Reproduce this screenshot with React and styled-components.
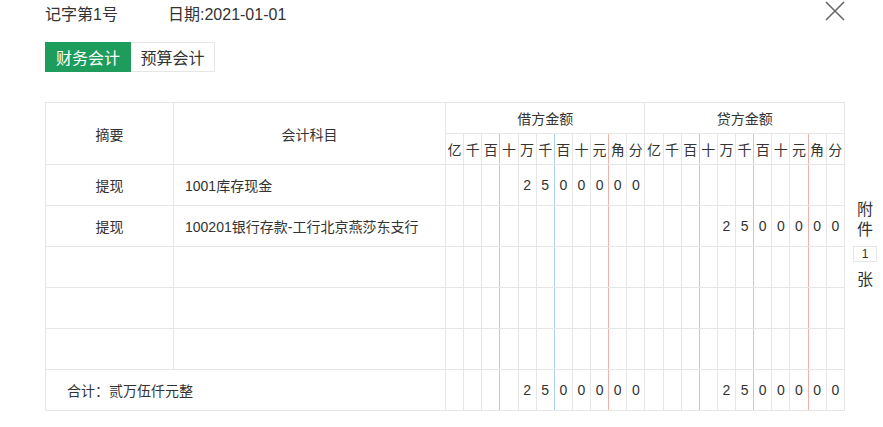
import styled, { createGlobalStyle } from "styled-components"

const GlobalStyle = createGlobalStyle`
  body {
    margin: 0;
    background: #fff;
    font-family: "Liberation Sans", "Noto Sans CJK SC", sans-serif;
    color: #333;
  }
`

const units = ["亿", "千", "百", "十", "万", "千", "百", "十", "元", "角", "分"]
const amount = ["", "", "", "", "2", "5", "0", "0", "0", "0", "0"]
const empty = Array(11).fill("")

const rows = [
  { summary: "提现", account: "1001库存现金", debit: amount, credit: empty },
  { summary: "提现", account: "100201银行存款-工行北京燕莎东支行", debit: empty, credit: amount },
  { summary: "", account: "", debit: empty, credit: empty },
  { summary: "", account: "", debit: empty, credit: empty },
  { summary: "", account: "", debit: empty, credit: empty },
]

const GRID = "#e6e6e6"
const BLUE = "#a9d3ea"
const RED = "#efb3ab"

// line after 百 and 千 is blue, after 元 is red
function rightLine(i) {
  if (i === 2 || i === 5) return BLUE
  if (i === 8) return RED
  return GRID
}

function Digits({ values, header }) {
  return values.map((v, i) => (
    <DigitCell key={i} $right={rightLine(i)} $header={header}>{v}</DigitCell>
  ))
}

export default function App() {
  return (
    <Page>
      <GlobalStyle />
      <TopBar>
        <VoucherNo>记字第1号</VoucherNo>
        <DateText>日期:2021-01-01</DateText>
        <CloseBtn>
          <svg width="20" height="20" viewBox="0 0 20 20">
            <path d="M1 1 L19 19 M19 1 L1 19" stroke="#666" strokeWidth="1.6" fill="none" />
          </svg>
        </CloseBtn>
      </TopBar>
      <Tabs>
        <Tab $active>财务会计</Tab>
        <Tab>预算会计</Tab>
      </Tabs>
      <Body>
        <Table>
          <colgroup>
            <col style={{ width: 128 }} />
            <col style={{ width: 272 }} />
            {Array.from({ length: 22 }).map((_, i) => <col key={i} />)}
          </colgroup>
          <thead>
            <tr>
              <HeadCell rowSpan={2}>摘要</HeadCell>
              <HeadCell rowSpan={2}>会计科目</HeadCell>
              <GroupCell colSpan={11}>借方金额</GroupCell>
              <GroupCell colSpan={11}>贷方金额</GroupCell>
            </tr>
            <tr>
              <Digits values={units} header />
              <Digits values={units} header />
            </tr>
          </thead>
          <tbody>
            {rows.map((r, idx) => (
              <tr key={idx}>
                <SummaryCell>{r.summary}</SummaryCell>
                <AccountCell>{r.account}</AccountCell>
                <Digits values={r.debit} />
                <Digits values={r.credit} />
              </tr>
            ))}
            <tr>
              <TotalCell colSpan={2}>合计：贰万伍仟元整</TotalCell>
              <Digits values={amount} />
              <Digits values={amount} />
            </tr>
          </tbody>
        </Table>
        <Attach>
          <AttachChar>附</AttachChar>
          <AttachChar>件</AttachChar>
          <AttachBox>1</AttachBox>
          <AttachChar>张</AttachChar>
        </Attach>
      </Body>
    </Page>
  )
}

const Page = styled.div`
  width: 883px;
  height: 427px;
  padding-left: 45px;
  box-sizing: border-box;
  position: relative;
`

const TopBar = styled.div`
  display: flex;
  align-items: center;
  height: 26px;
  font-size: 16px;
  color: #333;
`

const VoucherNo = styled.span`
  width: 123px;
`

const DateText = styled.span``

const CloseBtn = styled.div`
  position: absolute;
  left: 825px;
  top: 1px;
  width: 20px;
  height: 20px;
  cursor: pointer;
`

const Tabs = styled.div`
  display: flex;
  margin-top: 16px;
  height: 30px;
`

const Tab = styled.div`
  box-sizing: border-box;
  display: flex;
  align-items: center;
  justify-content: center;
  font-size: 16px;
  background: ${p => (p.$active ? "#1e9c5b" : "#fff")};
  color: ${p => (p.$active ? "#fff" : "#333")};
  border: 1px solid ${p => (p.$active ? "#1e9c5b" : GRID)};
  border-left: ${p => (p.$active ? "1px solid #1e9c5b" : "none")};
  width: ${p => (p.$active ? "86px" : "84px")};
`

const Body = styled.div`
  display: flex;
  margin-top: 30px;
  gap: 8px;
`

const Table = styled.table`
  width: 800px;
  table-layout: fixed;
  border-collapse: collapse;
  border: 1px solid ${GRID};
  font-size: 14px;
  color: #333;

  td, th {
    padding: 0;
    font-weight: normal;
  }
`

const HeadCell = styled.th`
  border: 1px solid ${GRID};
  height: 61px;
  text-align: center;
`

const GroupCell = styled.th`
  border: 1px solid ${GRID};
  height: 30px;
  text-align: center;
`

const DigitCell = styled.td`
  border: 1px solid ${GRID};
  border-right-color: ${p => p.$right};
  text-align: center;
  height: ${p => (p.$header ? "30px" : "40px")};
  font-size: 14px;
  font-family: ${p => (p.$header ? '"Noto Sans CJK SC", sans-serif' : '"Liberation Sans", sans-serif')};
`

const SummaryCell = styled.td`
  border: 1px solid ${GRID};
  text-align: center;
  height: 40px;
`

const AccountCell = styled.td`
  border: 1px solid ${GRID};
  padding-left: 11px !important;
  text-align: left;
`

const TotalCell = styled.td`
  border: 1px solid ${GRID};
  padding-left: 21px !important;
  text-align: left;
  height: 40px;
`

const Attach = styled.div`
  display: flex;
  flex-direction: column;
  align-items: center;
  width: 24px;
  padding-top: 98px;
`

const AttachChar = styled.div`
  font-size: 16px;
  line-height: 20px;
  color: #333;
`

const AttachBox = styled.div`
  width: 24px;
  height: 16px;
  box-sizing: border-box;
  border: 1px solid ${GRID};
  font-size: 12px;
  line-height: 14px;
  text-align: center;
  margin: 6px 0 8px;
`
